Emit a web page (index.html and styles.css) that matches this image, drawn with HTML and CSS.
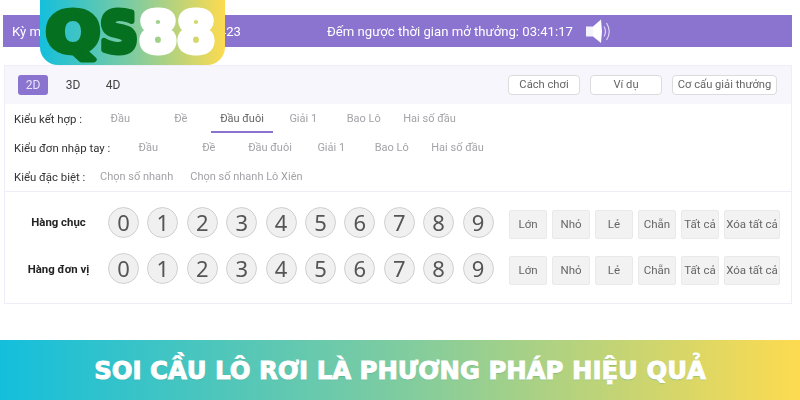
FILE: index.html
```html
<!DOCTYPE html>
<html lang="vi">
<head>
<meta charset="utf-8">
<title>QS88</title>
<link rel="stylesheet" href="styles.css">
</head>
<body>
<div class="page">
  <svg class="logo" width="185" height="65" viewBox="0 0 185 65" role="img" aria-label="QS88">
    <text class="logo-dark" x="6" y="51" textLength="54" lengthAdjust="spacingAndGlyphs">Q</text>
    <text class="logo-dark" x="60" y="51" textLength="38" lengthAdjust="spacingAndGlyphs">S</text>
    <text class="logo-light" x="99" y="51" textLength="38" lengthAdjust="spacingAndGlyphs">8</text>
    <text class="logo-light" x="137" y="51" textLength="38" lengthAdjust="spacingAndGlyphs">8</text>
  </svg>
  <main class="content">
    <header class="topbar">
      <div class="period"><span>Kỳ m</span><span>423</span></div>
      <div class="countdown">Đếm ngược thời gian mở thưởng: 03:41:17</div>
      <svg class="speaker" width="27" height="25" viewBox="0 0 27 25">
        <rect x="1" y="7.500" width="7" height="10" fill="#f4f2fb"/>
        <path d="M8 7.500 L16 0.500 L17 12.500 L16 24 L8 17.500 Z" fill="#fff"/>
        <path d="M19 7.500 Q22 12.500 19 17.500" fill="none" stroke="#dcd5f2" stroke-width="1.200"/>
        <path d="M21.500 4 Q27 12.500 21.500 21" fill="none" stroke="#dcd5f2" stroke-width="1.200"/>
      </svg>
    </header>
    <section class="panel">
      <div class="panel-head">
        <div class="tabs">
          <span class="tab active">2D</span>
          <span class="tab">3D</span>
          <span class="tab">4D</span>
        </div>
        <div class="links">
          <span class="link">Cách chơi</span>
          <span class="link">Ví dụ</span>
          <span class="link link-wide">Cơ cấu giải thưởng</span>
        </div>
      </div>
      <div class="types">
        <div class="type-row">
          <span class="type-label l1">Kiểu kết hợp :</span>
          <span class="opt">Đầu</span><span class="opt">Đề</span><span class="opt current">Đầu đuôi</span><span class="opt">Giải 1</span><span class="opt">Bao Lô</span><span class="opt wide">Hai số đầu</span>
        </div>
        <div class="type-row">
          <span class="type-label l2">Kiểu đơn nhập tay :</span>
          <span class="opt">Đầu</span><span class="opt">Đề</span><span class="opt mid">Đầu đuôi</span><span class="opt">Giải 1</span><span class="opt">Bao Lô</span><span class="opt wide">Hai số đầu</span>
        </div>
        <div class="type-row">
          <span class="type-label l3">Kiểu đặc biệt :</span>
          <span class="plain">Chọn số nhanh</span><span class="plain">Chọn số nhanh Lô Xiên</span>
        </div>
      </div>
      <div class="picker">
        <div class="pick-row">
          <span class="pick-label">Hàng chục</span>
          <div class="balls"><span class="ball">0</span><span class="ball">1</span><span class="ball">2</span><span class="ball">3</span><span class="ball">4</span><span class="ball">5</span><span class="ball">6</span><span class="ball">7</span><span class="ball">8</span><span class="ball">9</span></div>
          <div class="quick"><span class="qbtn">Lớn</span><span class="qbtn">Nhỏ</span><span class="qbtn">Lẻ</span><span class="qbtn">Chẵn</span><span class="qbtn">Tất cả</span><span class="qbtn qwide">Xóa tất cả</span></div>
        </div>
        <div class="pick-row">
          <span class="pick-label">Hàng đơn vị</span>
          <div class="balls"><span class="ball">0</span><span class="ball">1</span><span class="ball">2</span><span class="ball">3</span><span class="ball">4</span><span class="ball">5</span><span class="ball">6</span><span class="ball">7</span><span class="ball">8</span><span class="ball">9</span></div>
          <div class="quick"><span class="qbtn">Lớn</span><span class="qbtn">Nhỏ</span><span class="qbtn">Lẻ</span><span class="qbtn">Chẵn</span><span class="qbtn">Tất cả</span><span class="qbtn qwide">Xóa tất cả</span></div>
        </div>
      </div>
    </section>
  </main>
  <footer class="banner"><span class="banner-text">SOI CẦU LÔ RƠI LÀ PHƯƠNG PHÁP HIỆU QUẢ</span></footer>
</div>
</body>
</html>
```
FILE: styles.css
```css
* { box-sizing: border-box; }
html, body { margin: 0; padding: 0; background: #fff; }
body { font-family: "Roboto", "Noto Sans", sans-serif; overflow: hidden; }
.page { position: relative; width: 800px; height: 400px; display: flex; flex-direction: column; }
.content { height: 340px; padding: 15px 8px 0 3px; filter: blur(0.3px); }

.logo {
  position: absolute; z-index: 2; left: 40px; top: 0;
  border-radius: 0 0 18px 18px;
  background: linear-gradient(90deg, #14bfdc 0%, #7fcca0 50%, #fddb50 100%);
}
.logo text { font-family: "DejaVu Sans", sans-serif; font-weight: 700; font-size: 55px; stroke-width: 6px; stroke-linejoin: round; }
.logo-dark { fill: #05701f; stroke: #05701f; }
.logo-light { fill: #fff; stroke: #fff; }

.topbar {
  height: 32px; background: #8b73d0; color: #fff; font-size: 13.150px;
  display: flex; align-items: center; padding-left: 9px;
}
.period { width: 229px; display: flex; justify-content: space-between; }
.countdown { margin-left: 86px; white-space: nowrap; }
.speaker { margin-left: 12px; }

.panel { margin: 18px 0 0 1px; height: 239px; border: 1.500px solid #eeeef8; }
.panel-head {
  height: 38px; background: #f6f6fc; display: flex; align-items: center;
  justify-content: space-between; padding: 0 14px 0 13px;
}
.tabs { display: flex; align-items: center; }
.tab { width: 30px; height: 20px; margin-right: 10px; font-size: 12px; line-height: 20px; text-align: center; color: #444; border-radius: 3px; }
.tab.active { background: #8b73d0; color: #e8e3f7; }
.links { display: flex; gap: 10px; }
.link {
  width: 72px; height: 20px; background: #fff; border: 1px solid #dcdcdc; border-radius: 4px;
  font-size: 11.200px; line-height: 18px; text-align: center; color: #666; white-space: nowrap;
}
.link-wide { width: 105px; }

.types { height: 88px; border-bottom: 1.500px solid #eeeef8; padding: 0 0 0 9px; }
.type-row { height: 29px; display: flex; align-items: center; font-size: 11px; white-space: nowrap; }
.type-label { color: #333; flex: none; font-size: 11.400px; }
.l1 { width: 76px; }
.l2 { width: 104px; }
.l3 { width: 86px; }
.opt { width: 60.500px; height: 29px; line-height: 29px; text-align: center; color: #a3a3a8; flex: none; }
.opt.wide { width: 71px; }
.current { width: 62px; color: #666; border-bottom: 2px solid #8b73d0; height: 27px; margin-top: 2px; line-height: 25px; }
.mid { width: 62px; }
.plain { color: #a3a3a8; margin-right: 17px; }

.picker { padding-top: 6.750px; }
.pick-row { height: 46.500px; display: flex; align-items: center; }
.pick-label { width: 103px; padding-left: 4px; font-size: 11.400px; font-weight: 700; color: #222; text-align: center; flex: none; }
.balls { display: flex; gap: 8.400px; }
.ball {
  width: 31px; height: 31px; border-radius: 50%; background: #f0f0f0; border: 1px solid #cfcfcf;
  font-family: "Noto Sans", sans-serif; font-size: 22px; line-height: 28px; text-align: center; color: #555;
}
.quick { display: flex; gap: 5px; margin-left: 15.500px; margin-top: 4px; }
.qbtn {
  width: 38px; height: 29px; background: #f2f2f2; border: 1px solid #e9e9e9; border-radius: 2px;
  font-size: 11.500px; line-height: 27px; text-align: center; color: #666; white-space: nowrap;
}
.qwide { width: 56px; }

.banner {
  height: 60px; background: linear-gradient(90deg, #14bfdc 0%, #7fcca0 50%, #fddb50 100%);
  display: flex; align-items: center; justify-content: center;
}
.banner-text {
  font-family: "DejaVu Sans", sans-serif; font-weight: 700; font-size: 24.400px; color: #fff;
  white-space: nowrap; -webkit-text-stroke: 1px #fff; text-shadow: 0 1px 1px rgba(40,140,120,.5);
}
```
